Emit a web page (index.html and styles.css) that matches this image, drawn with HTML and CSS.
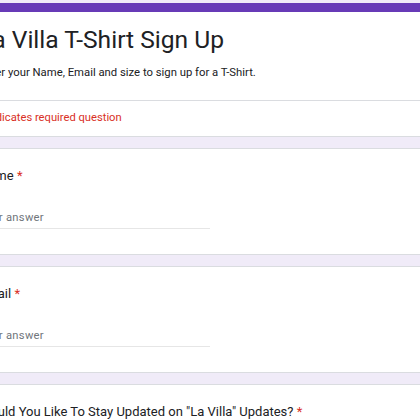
FILE: index.html
```html
<!DOCTYPE html>
<html lang="en">
  <head>
    <meta charset="UTF-8" />
    <meta name="viewport" content="width=device-width, initial-scale=1.0" />
    <title>La Villa T-Shirt Sign Up</title>
    <link rel="stylesheet" href="styles.css">
  </head>
  <body>
    <div class="form">
      <div class="card header-card">
        <div class="header-top">
          <h1>La Villa T-Shirt Sign Up</h1>
          <p class="desc">Enter your Name, Email and size to sign up for a T-Shirt.</p>
        </div>
        <div class="required-note">* Indicates required question</div>
      </div>

      <div class="card question">
        <div class="q-title">Name <span class="req">*</span></div>
        <div class="answer">Your answer</div>
      </div>

      <div class="card question">
        <div class="q-title">Email <span class="req">*</span></div>
        <div class="answer">Your answer</div>
      </div>

      <div class="card question">
        <div class="q-title">Would You Like To Stay Updated on "La Villa" Updates? <span class="req">*</span></div>
      </div>
    </div>
  </body>
</html>
```

FILE: styles.css
```css
* {
  box-sizing: border-box;
}
body {
  margin: 0;
  background-color: #f0ebf8;
  font-family: Roboto, "Liberation Sans", sans-serif;
  color: #202124;
  overflow: hidden;
}
.form {
  width: 512px;
  margin-left: -46px;
  padding-top: 3px;
}
.card {
  background-color: #fff;
  border: 1px solid #dadce0;
  border-radius: 8px;
  margin-bottom: 11px;
}
.header-card {
  border-top: 9px solid #673ab7;
}
.header-top {
  padding: 12px 24px 18px;
  border-bottom: 1px solid #dadce0;
}
h1 {
  margin: 0;
  font-size: 24.6px;
  line-height: 32px;
  font-weight: 400;
}
.desc {
  margin: 8px 0 0;
  font-size: 11.3px;
  line-height: 18px;
}
.required-note {
  padding: 8px 24px 9px;
  font-size: 11.2px;
  line-height: 18px;
  color: #d93025;
}
.question {
  padding: 15px 24px 25px;
}
.q-title {
  font-size: 13px;
  line-height: 24px;
}
.req {
  color: #d93025;
}
.answer {
  width: 50%;
  margin-top: 21px;
  padding-bottom: 1px;
  border-bottom: 1px solid #e6e6e6;
  font-size: 11.2px;
  line-height: 18px;
  letter-spacing: 0.3px;
  color: #70757a;
}
```
